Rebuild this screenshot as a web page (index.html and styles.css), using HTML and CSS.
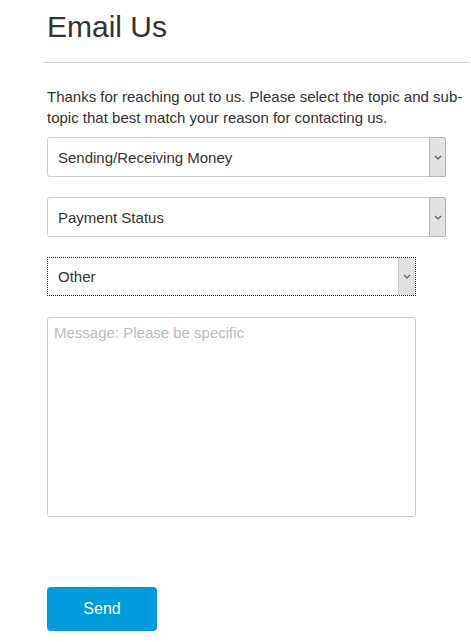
FILE: index.html
```html
<!DOCTYPE html>
<html lang="en">
<head>
<meta charset="utf-8">
<title>Email Us</title>
<link rel="stylesheet" href="styles.css">
</head>
<body>
<main class="page">
  <h1 class="title">Email Us</h1>
  <div class="divider"></div>
  <p class="intro">Thanks for reaching out to us. Please select the topic and sub-topic that best match your reason for contacting us.</p>
  <form class="form">
    <div class="select select-wide">
      <span class="select-text">Sending/Receiving Money</span>
      <span class="select-arrow"><svg width="8" height="5" viewBox="0 0 8 5"><path d="M1 1 L4 4 L7 1" fill="none" stroke="#555" stroke-width="1.1"/></svg></span>
    </div>
    <div class="select select-wide">
      <span class="select-text">Payment Status</span>
      <span class="select-arrow"><svg width="8" height="5" viewBox="0 0 8 5"><path d="M1 1 L4 4 L7 1" fill="none" stroke="#555" stroke-width="1.1"/></svg></span>
    </div>
    <div class="select select-narrow select-focus">
      <span class="select-text">Other</span>
      <span class="select-arrow"><svg width="8" height="5" viewBox="0 0 8 5"><path d="M1 1 L4 4 L7 1" fill="none" stroke="#555" stroke-width="1.1"/></svg></span>
    </div>
    <textarea class="message" placeholder="Message: Please be specific"></textarea>
    <button type="button" class="send">Send</button>
  </form>
</main>
</body>
</html>
```

FILE: styles.css
```css
* { box-sizing: border-box; }
html, body { margin: 0; padding: 0; background: #fff; }
body {
  font-family: "Liberation Sans", Arial, sans-serif;
  color: #333;
}
.page {
  padding: 9px 2px 0 47px;
}
.title {
  margin: 0;
  font-size: 30px;
  line-height: 36px;
  font-weight: normal;
  color: #333;
}
.divider {
  height: 1px;
  background: #ccc;
  margin: 17px 0 0 -4px;
}
.intro {
  margin: 23px 0 0 0;
  font-size: 15px;
  line-height: 21px;
  color: #333;
}
.form {
  display: flex;
  flex-direction: column;
  align-items: flex-start;
  margin-top: 9px;
}
.select {
  position: relative;
  display: flex;
  align-items: center;
  height: 40px;
  border: 1px solid #ccc;
  border-radius: 3px;
  background: #fff;
  padding-left: 10px;
  font-size: 15px;
  color: #333;
  margin-bottom: 20px;
}
.select-wide { width: 399px; }
.select-narrow { width: 369px; height: 39px; }
.select-focus {
  border: 1px dotted #222;
  border-radius: 0;
}
.select-text { flex: 1; }
.select-arrow {
  align-self: stretch;
  width: 17px;
  margin: -1px -1px -1px 0;
  background: #e1e1e1;
  border: 1px solid #b5b5b5;
  border-radius: 0 2px 2px 0;
  display: flex;
  align-items: center;
  justify-content: center;
}
.select-focus .select-arrow {
  margin: 0;
  border: none;
  border-left: 1px solid #c8c8c8;
  border-radius: 0;
}
.message {
  width: 369px;
  height: 200px;
  margin-top: 1px;
  border: 1px solid #ccc;
  border-radius: 3px;
  padding: 5px 6px;
  font-family: "Liberation Sans", Arial, sans-serif;
  font-size: 15px;
  line-height: 20px;
  color: #333;
  resize: none;
}
.message::placeholder { color: #bbb; }
.send {
  margin-top: 70px;
  width: 110px;
  height: 44px;
  border: none;
  border-radius: 4px;
  background: #009cde;
  color: #fff;
  font-family: "Liberation Sans", Arial, sans-serif;
  font-size: 16px;
}
```
